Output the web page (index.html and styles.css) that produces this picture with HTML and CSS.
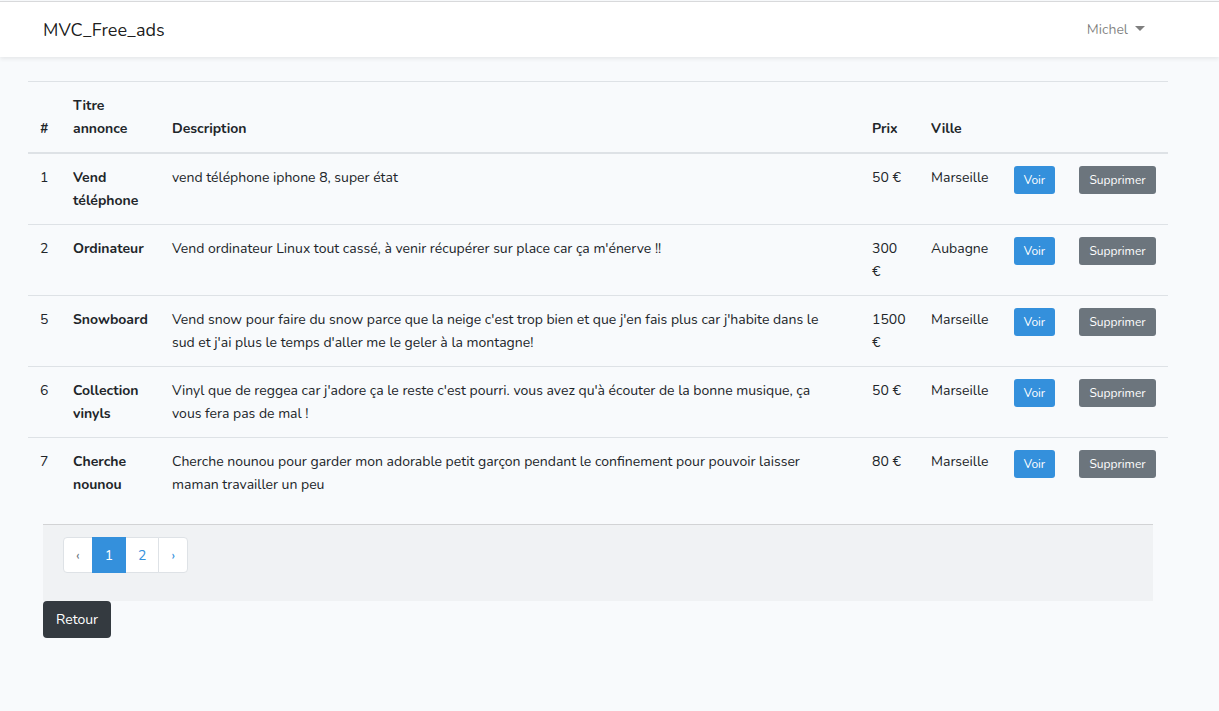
FILE: index.html
```html
<!DOCTYPE html>
<html lang="fr">
<head>
<meta charset="utf-8">
<meta name="viewport" content="width=device-width, initial-scale=1">
<title>MVC_Free_ads</title>
<link rel="stylesheet" href="styles.css">
</head>
<body>
<nav class="navbar">
  <a class="navbar-brand" href="#">MVC_Free_ads</a>
  <button class="user-menu" type="button" aria-haspopup="true">Michel<span class="caret"></span></button>
</nav>
<main class="container">
  <table class="table">
    <colgroup>
      <col class="col-id"><col class="col-title"><col><col class="col-price"><col class="col-city"><col class="col-view"><col class="col-delete">
    </colgroup>
    <thead>
      <tr><th scope="col">#</th><th scope="col">Titre annonce</th><th scope="col">Description</th><th scope="col">Prix</th><th scope="col">Ville</th><th></th><th></th></tr>
    </thead>
    <tbody>
      <tr>
        <td>1</td><th scope="row">Vend téléphone</th><td>vend téléphone iphone 8, super état</td><td>50 €</td><td>Marseille</td>
        <td><a class="btn btn-sm btn-primary" href="#">Voir</a></td><td><button class="btn btn-sm btn-secondary" type="button">Supprimer</button></td>
      </tr>
      <tr>
        <td>2</td><th scope="row">Ordinateur</th><td>Vend ordinateur Linux tout cassé, à venir récupérer sur place car ça m'énerve !!</td><td>300 €</td><td>Aubagne</td>
        <td><a class="btn btn-sm btn-primary" href="#">Voir</a></td><td><button class="btn btn-sm btn-secondary" type="button">Supprimer</button></td>
      </tr>
      <tr>
        <td>5</td><th scope="row">Snowboard</th><td>Vend snow pour faire du snow parce que la neige c'est trop bien et que j'en fais plus car j'habite dans le sud et j'ai plus le temps d'aller me le geler à la montagne!</td><td>1500 €</td><td>Marseille</td>
        <td><a class="btn btn-sm btn-primary" href="#">Voir</a></td><td><button class="btn btn-sm btn-secondary" type="button">Supprimer</button></td>
      </tr>
      <tr>
        <td>6</td><th scope="row">Collection vinyls</th><td>Vinyl que de reggea car j'adore ça le reste c'est pourri. vous avez qu'à écouter de la bonne musique, ça vous fera pas de mal !</td><td>50 €</td><td>Marseille</td>
        <td><a class="btn btn-sm btn-primary" href="#">Voir</a></td><td><button class="btn btn-sm btn-secondary" type="button">Supprimer</button></td>
      </tr>
      <tr>
        <td>7</td><th scope="row">Cherche nounou</th><td>Cherche nounou pour garder mon adorable petit garçon pendant le confinement pour pouvoir laisser maman travailler un peu</td><td>80 €</td><td>Marseille</td>
        <td><a class="btn btn-sm btn-primary" href="#">Voir</a></td><td><button class="btn btn-sm btn-secondary" type="button">Supprimer</button></td>
      </tr>
    </tbody>
  </table>
  <div class="list-end">
    <footer class="card-footer">
      <ul class="pagination">
        <li><span class="page-link disabled">‹</span></li>
        <li><span class="page-link active" aria-current="page">1</span></li>
        <li><a class="page-link" href="#">2</a></li>
        <li><a class="page-link" href="#">›</a></li>
      </ul>
    </footer>
    <a class="btn btn-dark" href="#">Retour</a>
  </div>
</main>
</body>
</html>
```
FILE: styles.css
```css
*, *::before, *::after { box-sizing: border-box; }

body {
  margin: 0;
  padding-top: 1px;
  background: #f8fafc;
  color: #212529;
  font-family: Nunito, "Open Sans", "Noto Sans", sans-serif;
  font-size: 14px;
  line-height: 23px;
}

a { text-decoration: none; }

.navbar {
  display: flex;
  align-items: center;
  justify-content: space-between;
  min-height: 56px;
  padding: 8px 74px 8px 43px;
  border-top: 1px solid #d8d9db;
  background: #fff;
  box-shadow: 0 2px 4px rgba(0, 0, 0, .075);
}

.navbar-brand {
  color: rgba(0, 0, 0, .9);
  font-size: 18px;
  line-height: 28px;
}

.user-menu {
  display: flex;
  align-items: center;
  gap: 7px;
  padding: 0;
  border: 0;
  background: none;
  color: rgba(0, 0, 0, .5);
  font: inherit;
}

.caret {
  margin-bottom: 2px;
  border-top: 5px solid;
  border-right: 5px solid transparent;
  border-left: 5px solid transparent;
}

.container {
  padding: 24px 51px 24px 28px;
}

.table {
  width: 100%;
  margin-bottom: 16px;
  table-layout: fixed;
  border-collapse: separate;
  border-spacing: 0;
}

.col-id { width: 33px; }
.col-title { width: 99px; }
.col-price { width: 59px; }
.col-city { width: 83px; }
.col-view { width: 65px; }
.col-delete { width: 101px; }

.table th,
.table td {
  padding: 12px;
  border-top: 1px solid #dee2e6;
  text-align: left;
  vertical-align: top;
}

.table thead th {
  border-bottom: 2px solid #dee2e6;
  vertical-align: bottom;
}

.table tbody tr:first-child > * { border-top: 0; }
.table td:first-child,
.table td:nth-child(5) { padding-right: 0; }
.table td:nth-child(3) { padding-right: 24px; }

.btn {
  display: inline-block;
  padding: 6px 12px;
  border: 1px solid transparent;
  border-radius: 4px;
  color: #fff;
  font-family: inherit;
  font-size: 14px;
  line-height: 23px;
  text-align: center;
  vertical-align: top;
}

.table .btn { width: 100%; }

.table .btn-sm {
  padding: 4px 0;
  border-radius: 3px;
  font-size: 12px;
  line-height: 18px;
}

.btn-primary { background: #3490dc; }
.btn-secondary { background: #6c757d; }
.btn-dark { background: #343a40; }

.list-end { padding: 0 15px; }

.card-footer {
  padding: 12px 20px;
  border-top: 1px solid rgba(0, 0, 0, .125);
  background: rgba(0, 0, 0, .03);
}

.pagination {
  display: flex;
  margin: 0 0 16px;
  padding: 0;
  list-style: none;
}

.page-link {
  display: block;
  margin-left: -1px;
  padding: 9px 12px 7px;
  border: 1px solid #dee2e6;
  background: #fff;
  color: #3490dc;
  line-height: 18px;
}

.pagination li:first-child .page-link {
  margin-left: 0;
  border-radius: 4px 0 0 4px;
}

.pagination li:last-child .page-link { border-radius: 0 4px 4px 0; }

.page-link.disabled { color: #6c757d; }

.page-link.active {
  position: relative;
  border-color: #3490dc;
  background: #3490dc;
  color: #fff;
}
```
